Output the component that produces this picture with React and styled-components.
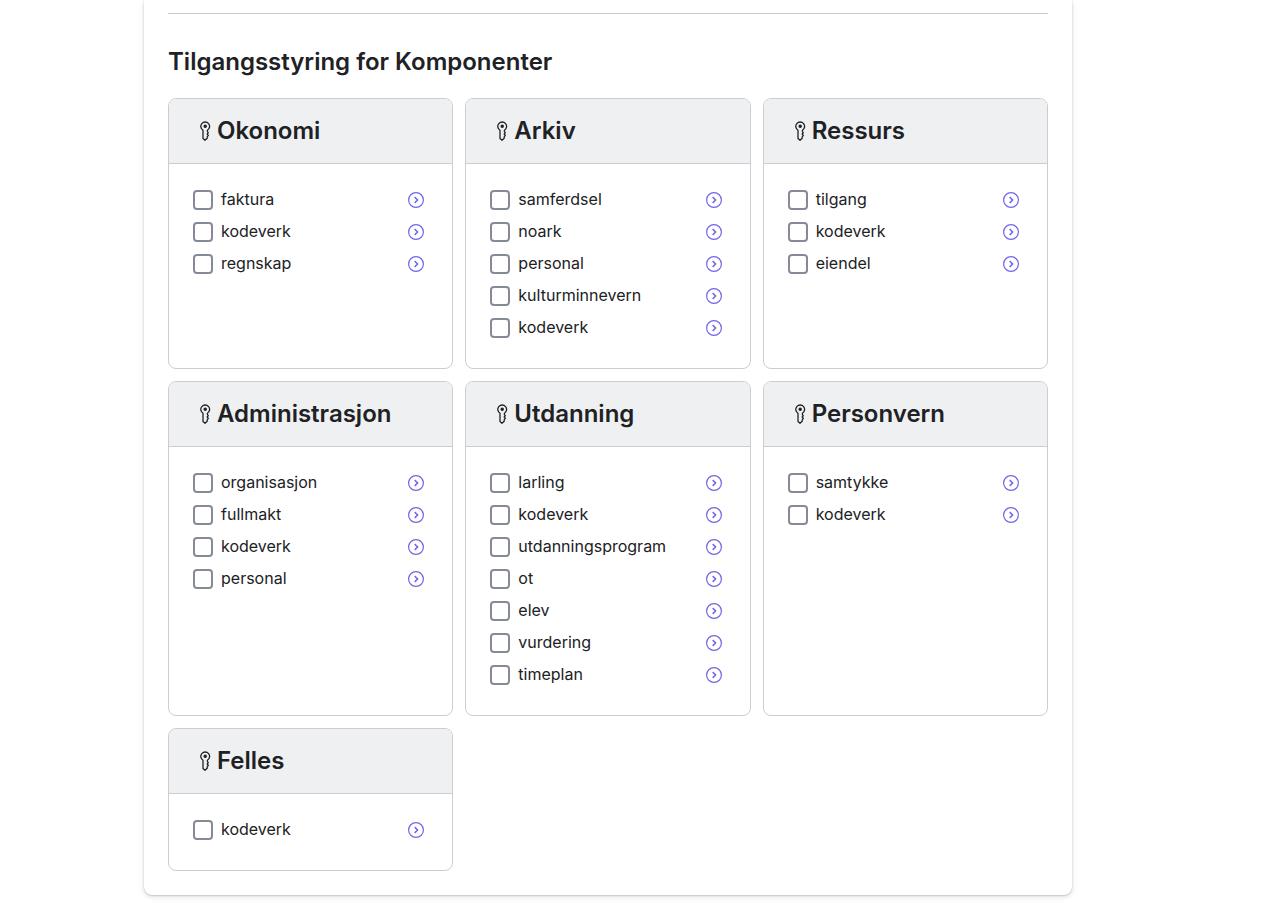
import React from "react";
import styled, { createGlobalStyle } from "styled-components";

const GlobalStyle = createGlobalStyle`
  *, *::before, *::after { box-sizing: border-box; }
  body {
    margin: 0;
    background: #fff;
    color: #202124;
    font-family: Inter, "Liberation Sans", sans-serif;
    font-size: 16px;
    line-height: 24px;
  }
`;

const Page = styled.div`
  padding: 0 199px 28px 144px;
`;

const Panel = styled.main`
  padding: 13px 24px 24px;
  background: #fff;
  border-radius: 0 0 8px 8px;
  box-shadow: 0 0 1px rgba(0, 0, 0, 0.2), 0 1px 2px rgba(0, 0, 0, 0.14),
    0 2px 6px rgba(0, 0, 0, 0.1);
`;

const Divider = styled.hr`
  height: 1px;
  margin: 0 0 32px;
  border: 0;
  background: #cbcdd3;
`;

const Title = styled.h2`
  margin: 0 0 20px;
  font-size: 24px;
  font-weight: 600;
  line-height: 32px;
`;

const Grid = styled.div`
  display: grid;
  grid-template-columns: repeat(3, minmax(0, 1fr));
  gap: 12px;
`;

const Card = styled.section`
  overflow: hidden;
  border: 1px solid #cbcdd3;
  border-radius: 8px;
`;

const CardHeader = styled.header`
  display: flex;
  align-items: center;
  gap: 6px;
  padding: 16px 30px;
  border-bottom: 1px solid #cbcdd3;
  background: #eff0f2;
`;

const CardTitle = styled.h3`
  margin: 0;
  font-size: 24px;
  font-weight: 600;
  line-height: 32px;
`;

const List = styled.ul`
  margin: 0;
  padding: 20px 24px 24px;
  list-style: none;
`;

const Row = styled.li`
  display: flex;
  align-items: center;
  justify-content: space-between;
  height: 32px;
`;

const Label = styled.label`
  display: flex;
  align-items: center;
  gap: 8px;
  font-size: 16px;
`;

const ItemName = styled.span`
  padding-bottom: 2px;
`;

const Checkbox = styled.input`
  appearance: none;
  width: 20px;
  height: 20px;
  margin: 0;
  border: 2px solid #868a98;
  border-radius: 4px;
  background: #fff;
  &:checked { background: #6a5fe0; border-color: #6a5fe0; }
`;

const OpenButton = styled.button`
  display: flex;
  padding: 2px;
  border: 0;
  background: none;
  color: #7065e6;
  cursor: pointer;
`;

const KeyIcon = () => (
  <svg width="12" height="20" viewBox="0 0 12 20" fill="none" stroke="currentColor" strokeWidth="1.3" strokeLinejoin="round" aria-hidden="true">
    <path d="M4 9.2A4.4 4.4 0 1 1 8.4 9.2V10.6L9.3 11.6L8.2 13L9.3 14.4L8.2 15.8V17.2L6 19.2L4 17.5Z" />
    <circle cx="6.2" cy="5.3" r="1.1" fill="currentColor" />
  </svg>
);

const ArrowIcon = () => (
  <svg width="20" height="20" viewBox="0 0 20 20" fill="none" stroke="currentColor" strokeWidth="1.2" aria-hidden="true">
    <circle cx="10" cy="10" r="7.4" />
    <path d="M8.7 7.1L11.6 10L8.7 12.9" strokeWidth="1.5" />
  </svg>
);

const domains = [
  { name: "Okonomi", items: ["faktura", "kodeverk", "regnskap"] },
  { name: "Arkiv", items: ["samferdsel", "noark", "personal", "kulturminnevern", "kodeverk"] },
  { name: "Ressurs", items: ["tilgang", "kodeverk", "eiendel"] },
  { name: "Administrasjon", items: ["organisasjon", "fullmakt", "kodeverk", "personal"] },
  { name: "Utdanning", items: ["larling", "kodeverk", "utdanningsprogram", "ot", "elev", "vurdering", "timeplan"] },
  { name: "Personvern", items: ["samtykke", "kodeverk"] },
  { name: "Felles", items: ["kodeverk"] },
];

function DomainCard({ name, items }) {
  return (
    <Card>
      <CardHeader>
        <KeyIcon />
        <CardTitle>{name}</CardTitle>
      </CardHeader>
      <List>
        {items.map((item) => {
          const id = `${name}-${item}`;
          return (
            <Row key={id}>
              <Label htmlFor={id}>
                <Checkbox type="checkbox" id={id} />
                <ItemName>{item}</ItemName>
              </Label>
              <OpenButton type="button" aria-label={item}>
                <ArrowIcon />
              </OpenButton>
            </Row>
          );
        })}
      </List>
    </Card>
  );
}

export default function App() {
  return (
    <>
      <GlobalStyle />
      <Page>
        <Panel>
          <Divider />
          <Title>Tilgangsstyring for Komponenter</Title>
          <Grid>
            {domains.map((domain) => (
              <DomainCard key={domain.name} {...domain} />
            ))}
          </Grid>
        </Panel>
      </Page>
    </>
  );
}
